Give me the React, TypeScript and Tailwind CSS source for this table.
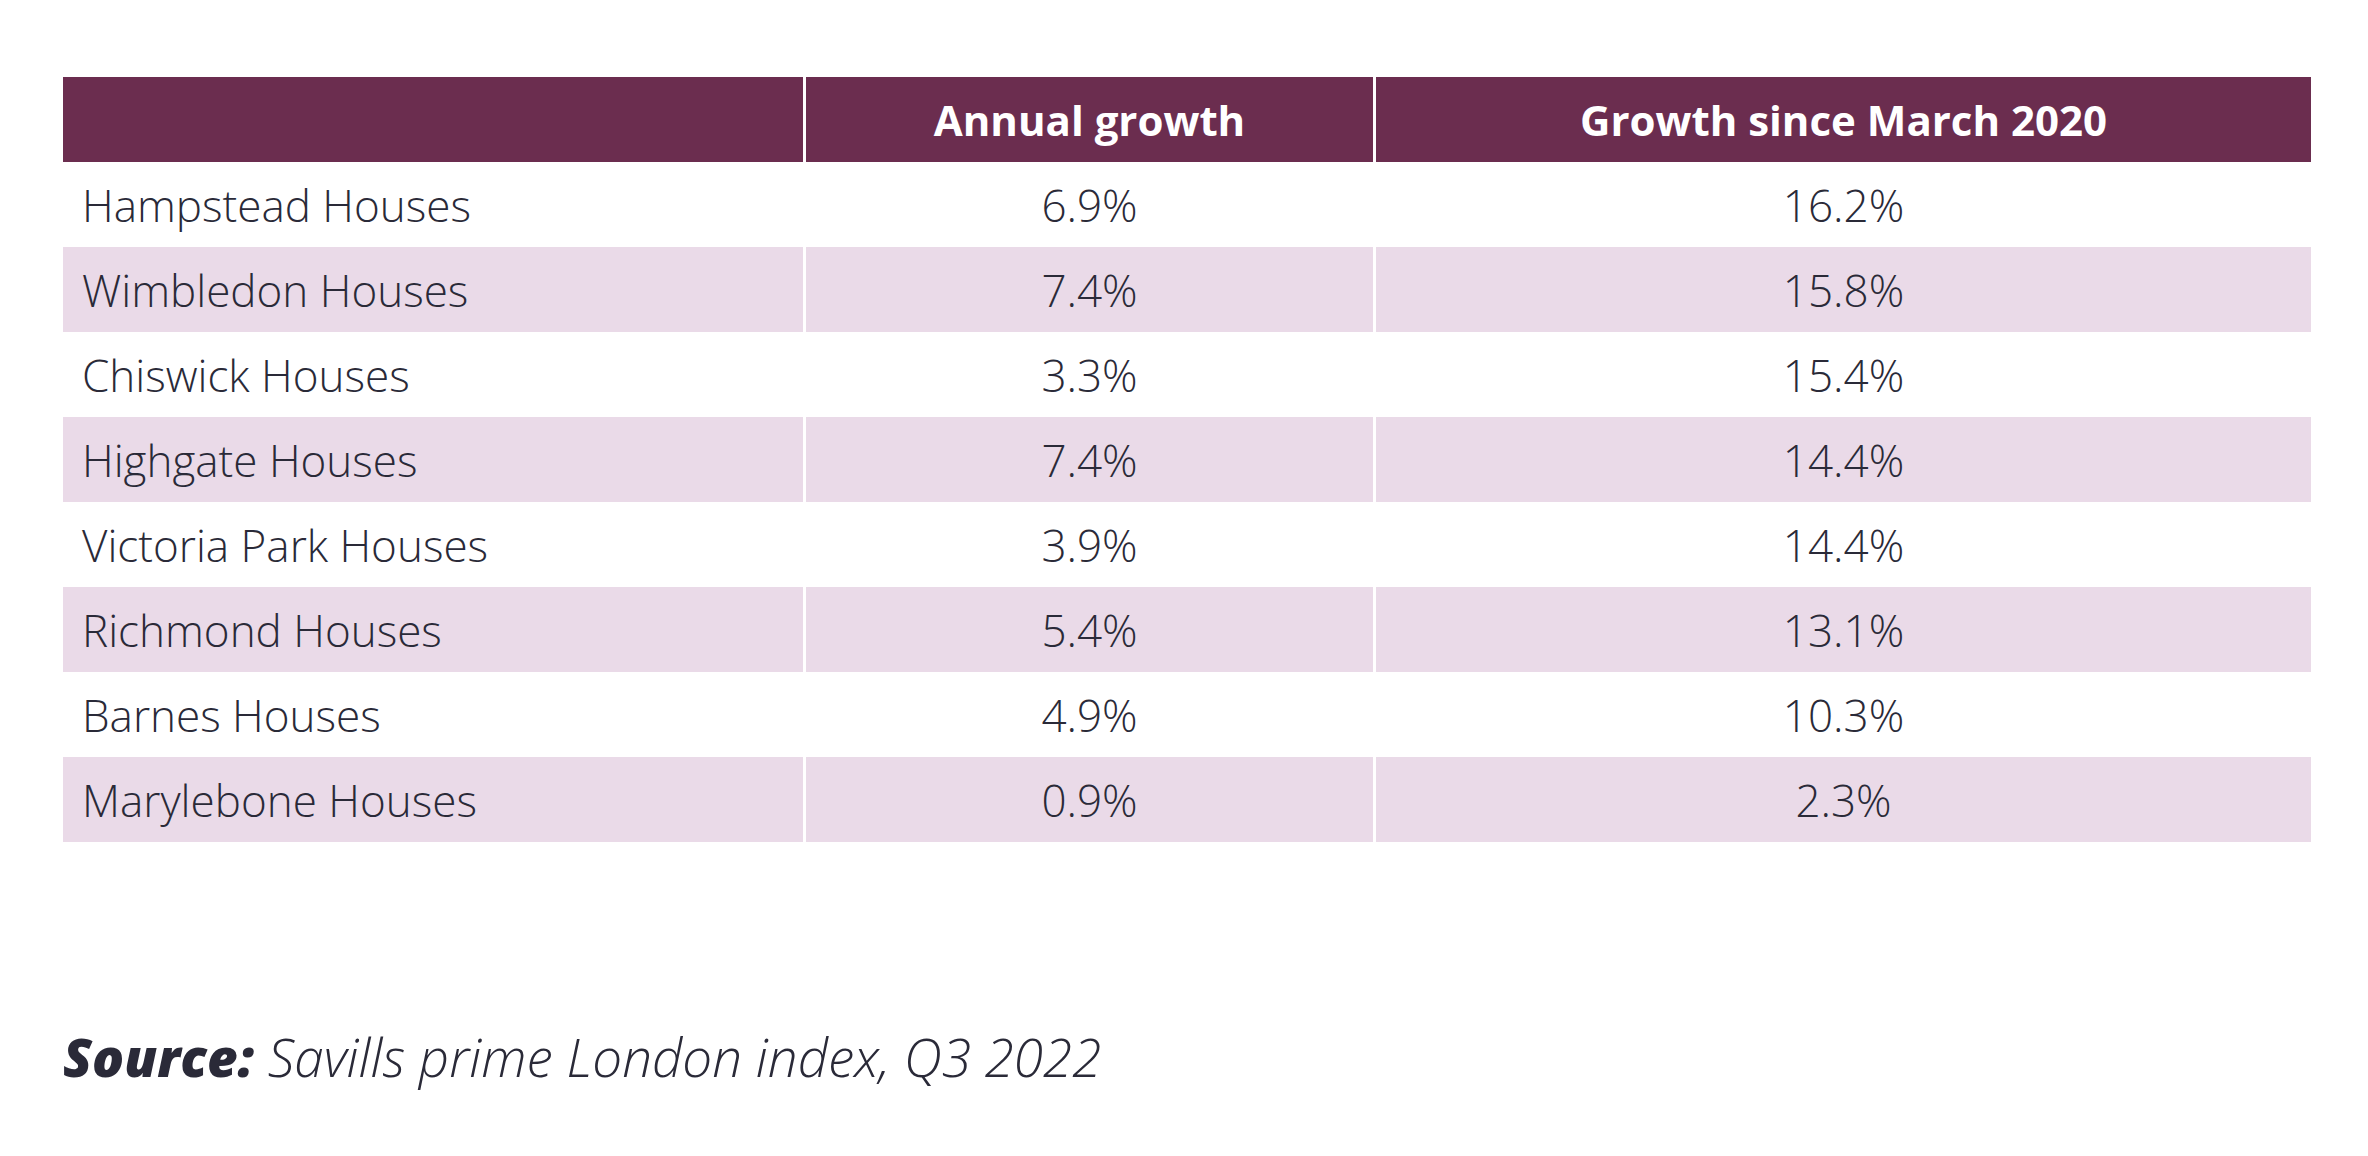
import React from "react";

const rows: [string, string, string][] = [
  ["Hampstead Houses", "6.9%", "16.2%"],
  ["Wimbledon Houses", "7.4%", "15.8%"],
  ["Chiswick Houses", "3.3%", "15.4%"],
  ["Highgate Houses", "7.4%", "14.4%"],
  ["Victoria Park Houses", "3.9%", "14.4%"],
  ["Richmond Houses", "5.4%", "13.1%"],
  ["Barnes Houses", "4.9%", "10.3%"],
  ["Marylebone Houses", "0.9%", "2.3%"],
];

export default function App() {
  return (
    <div
      className="w-[2368px] h-[1156px] bg-white pl-[63px] pt-[77px] text-[#2a2a38]"
      style={{ fontFamily: "'Open Sans', Lato, sans-serif" }}
    >
      <div className="grid grid-cols-[740px_567px_935px] gap-x-[3px] w-[2248px]">
        <div className="h-[85px] bg-[#6b2d4f]" />
        <div className="h-[85px] bg-[#6b2d4f] flex items-center justify-center text-white font-bold text-[42px]">
          Annual growth
        </div>
        <div className="h-[85px] bg-[#6b2d4f] flex items-center justify-center text-white font-bold text-[42px]">
          Growth since March 2020
        </div>
        {rows.map(([name, a, b], i) => {
          const bg = i % 2 === 1 ? "bg-[#eadae8]" : "bg-white";
          return (
            <React.Fragment key={name}>
              <div className={`h-[85px] ${bg} flex items-center pl-[19px] font-light text-[44px]`}>{name}</div>
              <div className={`h-[85px] ${bg} flex items-center justify-center font-light text-[44px]`}>{a}</div>
              <div className={`h-[85px] ${bg} flex items-center justify-center font-light text-[44px]`}>{b}</div>
            </React.Fragment>
          );
        })}
      </div>
      <div className="mt-[188px] text-[53px] italic leading-none">
        <span className="font-extrabold">Source:</span>{" "}
        <span className="font-light">Savills prime London index, Q3 2022</span>
      </div>
    </div>
  );
}
